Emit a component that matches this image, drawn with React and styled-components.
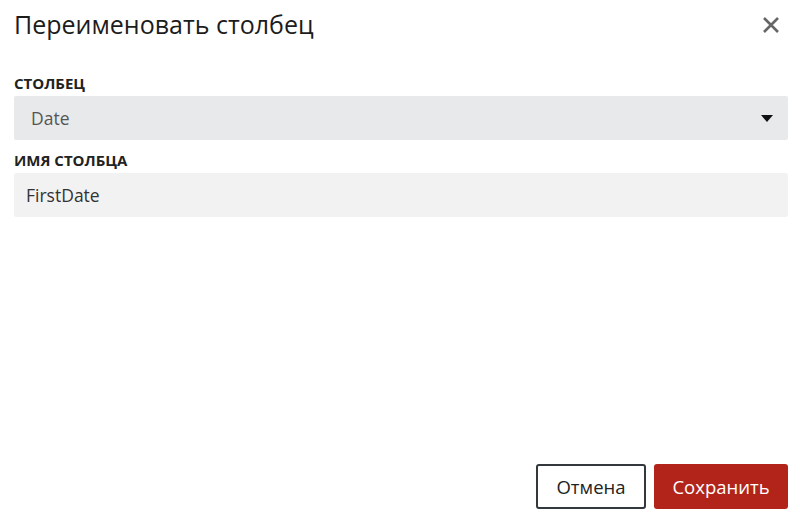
import React from "react";
import styled, { createGlobalStyle } from "styled-components";

const Global = createGlobalStyle`
  html, body { margin: 0; padding: 0; background: #fff; }
  body { font-family: "Open Sans", "Noto Sans", sans-serif; }
  * { box-sizing: border-box; }
`;

const Dialog = styled.div`
  width: 800px;
  height: 524px;
  display: flex;
  flex-direction: column;
  padding: 7px 12px 15px 14px;
  background: #fff;
`;

const Header = styled.div`
  display: flex;
  align-items: center;
  justify-content: space-between;
  height: 34px;
`;

const Title = styled.h1`
  margin: 0;
  font-size: 25px;
  line-height: 34px;
  font-weight: 400;
  color: #1c1c1c;
`;

const CloseButton = styled.button`
  border: 0;
  background: transparent;
  padding: 0;
  width: 20px;
  height: 20px;
  margin-right: 7px;
  margin-top: 2px;
  display: flex;
  align-items: center;
  justify-content: center;
  cursor: pointer;
`;

const Body = styled.div`
  display: flex;
  flex-direction: column;
  margin-top: 32px;
`;

const Label = styled.label`
  font-size: 15px;
  line-height: 20px;
  font-weight: 700;
  color: #222;
  text-transform: uppercase;
  margin-top: ${(p) => p.$top || 0}px;
  margin-bottom: 3px;
`;

const Field = styled.div`
  height: 44px;
  display: flex;
  align-items: center;
  justify-content: space-between;
  border-radius: 2px;
  background: ${(p) => (p.$select ? "#e8e9eb" : "#f2f2f2")};
  padding: 0 15px 0 ${(p) => (p.$select ? 17 : 12)}px;
  font-size: 17.5px;
  color: ${(p) => (p.$select ? "#555" : "#333")};
`;

const Footer = styled.div`
  margin-top: auto;
  display: flex;
  justify-content: flex-end;
  gap: 8px;
`;

const Button = styled.button`
  height: 45px;
  border-radius: 3px;
  font-family: inherit;
  font-size: 18.5px;
  padding: 0;
  cursor: pointer;
  width: ${(p) => (p.$primary ? 134 : 110)}px;
  border: ${(p) => (p.$primary ? "none" : "2px solid #33383c")};
  background: ${(p) => (p.$primary ? "#b22419" : "#fff")};
  color: ${(p) => (p.$primary ? "#fff" : "#222")};
`;

export default function App() {
  return (
    <>
      <Global />
      <Dialog>
        <Header>
          <Title>Переименовать столбец</Title>
          <CloseButton aria-label="close">
            <svg width="18" height="18" viewBox="0 0 18 18">
              <path d="M2 2 L16 16 M16 2 L2 16" stroke="#666" strokeWidth="2.6" />
            </svg>
          </CloseButton>
        </Header>
        <Body>
          <Label>Столбец</Label>
          <Field $select>
            <span>Date</span>
            <svg width="12" height="7" viewBox="0 0 12 7">
              <path d="M0 0 H12 L6 7 Z" fill="#111" />
            </svg>
          </Field>
          <Label $top={10}>Имя столбца</Label>
          <Field>FirstDate</Field>
        </Body>
        <Footer>
          <Button>Отмена</Button>
          <Button $primary>Сохранить</Button>
        </Footer>
      </Dialog>
    </>
  );
}
